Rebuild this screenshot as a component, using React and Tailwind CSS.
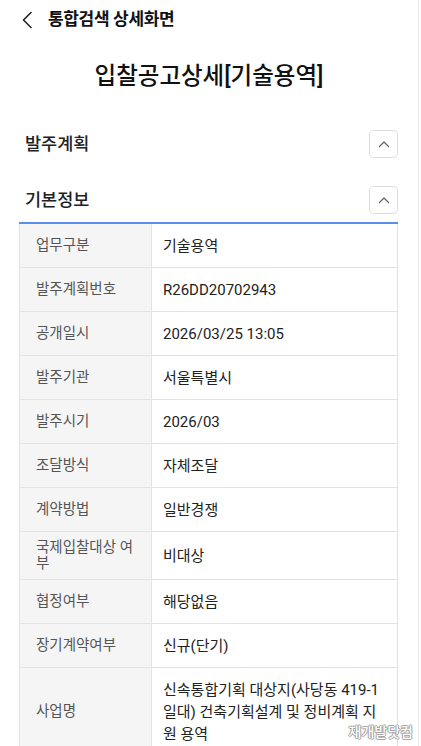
import React from "react";

const FONT = { fontFamily: 'Roboto, "Noto Sans CJK KR", "Noto Sans", sans-serif' };

const rows = [
  { label: "업무구분", value: "기술용역" },
  { label: "발주계획번호", value: "R26DD20702943" },
  { label: "공개일시", value: "2026/03/25 13:05" },
  { label: "발주기관", value: "서울특별시" },
  { label: "발주시기", value: "2026/03" },
  { label: "조달방식", value: "자체조달" },
  { label: "계약방법", value: "일반경쟁" },
  { label: ["국제입찰대상 여", "부"], value: "비대상" },
  { label: "협정여부", value: "해당없음" },
  { label: "장기계약여부", value: "신규(단기)" },
  {
    label: "사업명",
    value: ["신속통합기획 대상지(사당동 419-1", "일대) 건축기획설계 및 정비계획 지", "원 용역"],
  },
];

function Lines({ text }) {
  if (!Array.isArray(text)) return text;
  return text.map((t, i) => (
    <span key={i} className="block whitespace-nowrap">
      {t}
    </span>
  ));
}

function ChevronUpButton() {
  return (
    <button className="flex h-[28px] w-[29px] items-center justify-center rounded-[5px] border border-[#dedede] bg-white">
      <svg width="12" height="8" viewBox="0 0 12 8" fill="none">
        <path d="M1.5 6.5 L6 2 L10.5 6.5" stroke="#666" strokeWidth="1.3" strokeLinecap="round" strokeLinejoin="round" />
      </svg>
    </button>
  );
}

function SectionHeader({ title }) {
  return (
    <div className="flex items-center justify-between">
      <span className="pl-[6px] text-[17.5px] font-medium leading-[28px] text-[#222]">{title}</span>
      <ChevronUpButton />
    </div>
  );
}

export default function App() {
  return (
    <div className="relative h-[746px] w-[421px] overflow-hidden bg-white" style={FONT}>
      <div className="min-h-full w-[419px] border-r border-[#ebebeb]">
        {/* top bar */}
        <div className="flex h-[40px] items-center pl-[21px]">
          <svg width="12" height="18" viewBox="0 0 12 18" fill="none">
            <path d="M10 1.5 L2.5 9 L10 16.5" stroke="#222" strokeWidth="1.6" strokeLinecap="round" strokeLinejoin="round" />
          </svg>
          <span className="ml-[15px] text-[17px] font-bold tracking-[-0.02em] text-[#111]">통합검색 상세화면</span>
        </div>

        {/* page title */}
        <h1 className="pt-[22px] text-center text-[23.5px] font-medium leading-[28px] text-[#111]">
          입찰공고상세[기술용역]
        </h1>

        <div className="pl-[19px] pr-[20px]">
          <div className="mt-[40px]">
            <SectionHeader title="발주계획" />
          </div>
          <div className="mt-[28px]">
            <SectionHeader title="기본정보" />
          </div>

          {/* detail table */}
          <div className="mt-[8px] border-t-2 border-[#5b8ded]">
            {rows.map((r, i) => (
              <div key={i} className="grid grid-cols-[133px_1fr] border-b border-[#e3e3e3]">
                <div className="flex items-center border-l border-r border-[#e3e3e3] bg-[#f5f5f5] py-[8px] pl-[16px] text-[14.5px] leading-[15.5px] text-[#555]">
                  <div>
                    <Lines text={r.label} />
                  </div>
                </div>
                <div className="flex items-center border-r border-[#e3e3e3] py-[10.5px] pl-[11px] text-[15px] leading-[22px] text-[#222]">
                  <div>
                    <Lines text={r.value} />
                  </div>
                </div>
              </div>
            ))}
          </div>
        </div>
      </div>

      {/* watermark */}
      <div
        className="absolute bottom-[3px] right-[8px] text-[14px] font-medium text-white"
        style={{ textShadow: "0 0 1px #888, 1px 0 0 #aaa, -1px 0 0 #aaa, 0 1px 0 #aaa, 0 -1px 0 #aaa" }}
      >
        재개발닷컴
      </div>
    </div>
  );
}
